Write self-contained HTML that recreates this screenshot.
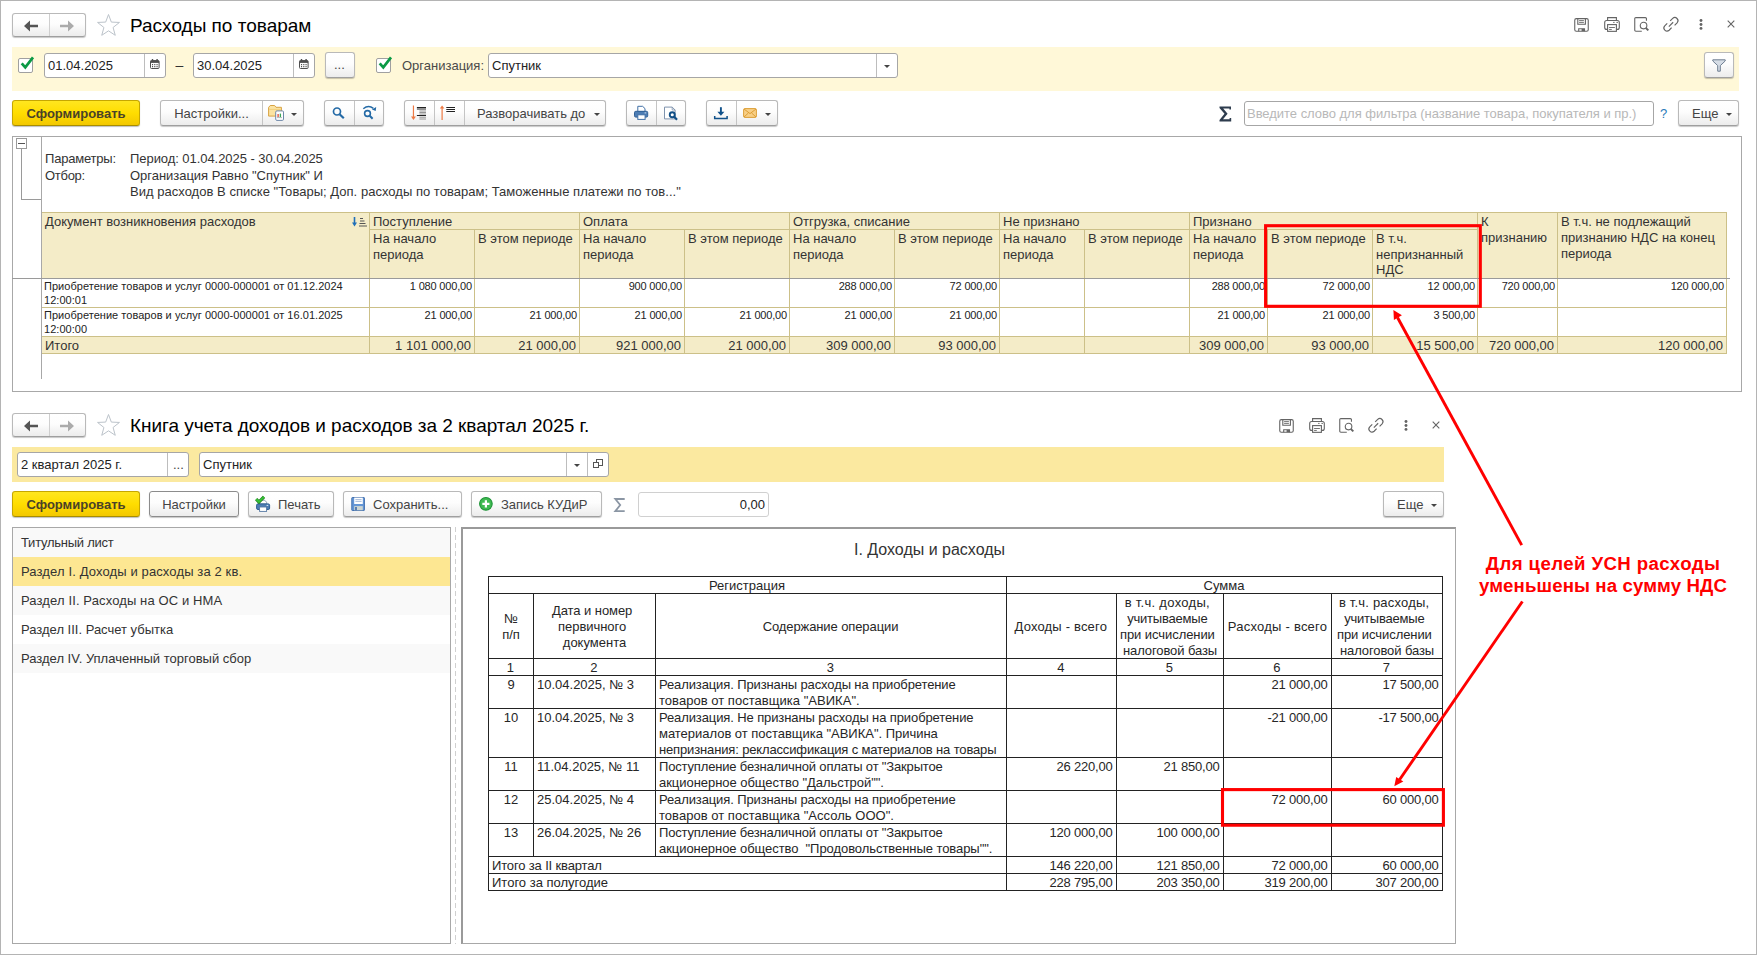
<!DOCTYPE html><html lang="ru"><head><meta charset="utf-8"><title>Расходы по товарам</title><style>
html,body{margin:0;padding:0;background:#fff;}
body{width:1759px;height:957px;position:relative;overflow:hidden;font-family:"Liberation Sans",Arial,sans-serif;font-size:13px;color:#333;}
div{position:absolute;box-sizing:border-box;}
svg{position:absolute;overflow:visible;}
.t{white-space:nowrap;line-height:16px;}
.l{}
.frame{border:1px solid #b4b4b4;}
.btn{border:1px solid #b9b9b9;border-bottom-color:#9f9f9f;border-radius:3px;background:linear-gradient(#ffffff 0%,#fdfdfd 45%,#ececec 100%);box-shadow:0 1px 1px rgba(0,0,0,.22);}
.btny{border:1px solid #c6a700;border-bottom-color:#a88d00;border-radius:3px;background:linear-gradient(#ffe620 0%,#ffdd00 50%,#f3c800 100%);box-shadow:0 1px 1px rgba(0,0,0,.25);}
.inp{border:1px solid #a6a6a6;border-radius:3px;background:#fff;}
.bt{color:#444;}
.title{font-size:19px;line-height:24px;color:#000;}
.small{font-size:11px;line-height:13px;color:#222;letter-spacing:0.035px;}
.rep{color:#333;}
.bk{color:#262626;line-height:15px;}
.red{color:#f00;font-weight:bold;font-size:19px;line-height:24px;}
</style></head><body>
<div class="frame" style="left:0px;top:0px;width:1757px;height:955px;"></div>
<div class="btn" style="left:12px;top:13px;width:74px;height:24px;"></div>
<div class="l" style="left:49px;top:14px;width:1px;height:22px;background:#cfcfcf"></div>
<svg style="left:23px;top:19.5px" width="16" height="12" viewBox="0 0 16 12"><path d="M1 6 L7 0.5 L7 4.7 L15 4.7 L15 7.3 L7 7.3 L7 11.5 Z" fill="#555"/></svg>
<svg style="left:59px;top:19.5px" width="16" height="12" viewBox="0 0 16 12"><path d="M15 6 L9 0.5 L9 4.7 L1 4.7 L1 7.3 L9 7.3 L9 11.5 Z" fill="#ababab"/></svg>
<svg style="left:0;top:0" width="1759" height="957"><polygon points="108.50,14.50 111.34,22.09 119.44,22.45 113.09,27.49 115.26,35.30 108.50,30.83 101.74,35.30 103.91,27.49 97.56,22.45 105.66,22.09" fill="#fff" stroke="#bcc3ca" stroke-width="1"/></svg>
<div class="t title" style="left:130px;top:14px;">Расходы по товарам</div>
<svg style="left:1574px;top:17px" width="16" height="16" viewBox="0 0 16 16" fill="none" stroke="#646464" stroke-width="1.1"><rect x="0.75" y="1.65" width="13.5" height="12.6" rx="1.6"/><path d="M3.8 1.7V7.3H11.4V1.7"/><path d="M5.1 3.6h4.8M5.1 5.4h4.8" stroke-width="0.9"/><path d="M4.7 14.2V11.7H10.5V14.2"/><rect x="7.6" y="11.9" width="2.7" height="2.2" fill="#646464" stroke="none"/></svg>
<svg style="left:1604px;top:17px" width="16" height="16" viewBox="0 0 16 16" fill="none" stroke="#646464" stroke-width="1.1"><path d="M3.6 3.4V0.6h8.8v2.8"/><rect x="0.7" y="3.5" width="14.6" height="8.9" rx="2"/><rect x="3.6" y="7.6" width="8.8" height="6.75" fill="#fff"/><path d="M5.1 10.5h5.8M5.1 12.45h2.7" stroke-width="0.9"/><path d="M9.1 5.4h1.5M12.4 5.4h1.6" stroke-width="0.9"/></svg>
<svg style="left:1634px;top:17px" width="16" height="16" viewBox="0 0 16 16" fill="none" stroke="#646464" stroke-width="1.1"><path d="M12.45 3.75V1.7a1.1 1.1 0 0 0-1.1-1.1H1.85a1.1 1.1 0 0 0-1.1 1.1v11.4a1.1 1.1 0 0 0 1.1 1.1H7.8"/><circle cx="9.55" cy="8.6" r="3.3"/><path d="M12.0 11.1l2.3 2.3" stroke-width="2"/></svg>
<svg style="left:1663.0px;top:17px" width="16" height="16" viewBox="0 0 16 16" fill="none" stroke="#646464" stroke-width="1.15" stroke-linecap="butt"><path d="M7.2 3.9L9.71 1.41A3.1 3.1 0 0 1 14.09 5.79L11.6 8.3"/><path d="M8.6 10.7L6.13 13.22A3.1 3.1 0 0 1 1.75 8.84L4.25 6.35"/><path d="M5.83 9.6L10.15 5.28"/></svg>
<svg style="left:1698.05px;top:17px" width="6" height="16" viewBox="0 0 6 16"><circle cx="3" cy="3.5" r="1.45" fill="#646464"/><circle cx="3" cy="7.5" r="1.45" fill="#646464"/><circle cx="3" cy="11.4" r="1.45" fill="#646464"/></svg>
<svg style="left:1727.0px;top:20.4px" width="8" height="8" viewBox="0 0 8 8"><path d="M0.7 0.7L7.3 7.3M7.3 0.7L0.7 7.3" stroke="#646464" stroke-width="1.1"/></svg>
<div class="" style="left:12px;top:47px;width:1727px;height:44px;background:#fff8d8;"></div>
<div class="" style="left:18px;top:58px;width:15px;height:15px;border:1px solid #a0a0a0;border-radius:2px;background:#fff;"></div>
<svg style="left:18px;top:56px" width="17" height="16" viewBox="0 0 17 16"><path d="M3.7 7.3 L7.3 11.4 L15.0 1.4" fill="none" stroke="#0b9a45" stroke-width="2.7"/></svg>
<div class="inp" style="left:44px;top:53px;width:122px;height:25px;"></div>
<div class="l" style="left:144px;top:54px;width:1px;height:23px;background:#bdbdbd"></div>
<div class="t " style="left:48px;top:58px;color:#222">01.04.2025</div>
<svg style="left:150px;top:59px" width="10" height="10" viewBox="0 0 10 10"><rect x="0.5" y="1.6" width="8.6" height="7.9" rx="1" fill="#fff" stroke="#4f4f4f"/><rect x="0.5" y="1.6" width="8.6" height="2.3" fill="#4f4f4f"/><rect x="1.8" y="0" width="1.4" height="2.6" fill="#4f4f4f"/><rect x="6.4" y="0" width="1.4" height="2.6" fill="#4f4f4f"/><path d="M2 5.6h1.1M4.25 5.6h1.1M6.5 5.6h1.1M2 7.6h1.1M4.25 7.6h1.1M6.5 7.6h1.1" stroke="#4f4f4f" stroke-width="1.1"/></svg>
<div class="t " style="left:175.5px;top:56.5px;color:#333;font-size:14px">–</div>
<div class="inp" style="left:193px;top:53px;width:122px;height:25px;"></div>
<div class="l" style="left:293px;top:54px;width:1px;height:23px;background:#bdbdbd"></div>
<div class="t " style="left:197px;top:58px;color:#222">30.04.2025</div>
<svg style="left:299px;top:59px" width="10" height="10" viewBox="0 0 10 10"><rect x="0.5" y="1.6" width="8.6" height="7.9" rx="1" fill="#fff" stroke="#4f4f4f"/><rect x="0.5" y="1.6" width="8.6" height="2.3" fill="#4f4f4f"/><rect x="1.8" y="0" width="1.4" height="2.6" fill="#4f4f4f"/><rect x="6.4" y="0" width="1.4" height="2.6" fill="#4f4f4f"/><path d="M2 5.6h1.1M4.25 5.6h1.1M6.5 5.6h1.1M2 7.6h1.1M4.25 7.6h1.1M6.5 7.6h1.1" stroke="#4f4f4f" stroke-width="1.1"/></svg>
<div class="btn" style="left:325px;top:52px;width:30px;height:26px;"></div>
<div class="t bt" style="left:334px;top:57px;">...</div>
<div class="" style="left:376px;top:58px;width:15px;height:15px;border:1px solid #a0a0a0;border-radius:2px;background:#fff;"></div>
<svg style="left:376px;top:56px" width="17" height="16" viewBox="0 0 17 16"><path d="M3.7 7.3 L7.3 11.4 L15.0 1.4" fill="none" stroke="#0b9a45" stroke-width="2.7"/></svg>
<div class="t " style="left:402px;top:58px;color:#4a4a4a">Организация:</div>
<div class="inp" style="left:488px;top:53px;width:410px;height:25px;"></div>
<div class="l" style="left:876px;top:54px;width:1px;height:23px;background:#bdbdbd"></div>
<div class="t " style="left:492px;top:58px;color:#222">Спутник</div>
<svg style="left:883.5px;top:65px" width="6" height="3" viewBox="0 0 6 3"><path d="M0 0h6L3 3z" fill="#444"/></svg>
<div class="btn" style="left:1704px;top:52px;width:30px;height:26px;"></div>
<svg style="left:1712px;top:59px" width="14" height="13" viewBox="0 0 14 13"><path d="M0.8 0.8h12.4v1.2L8.3 6.6v5.6H5.7V6.6L0.8 2z" fill="#d6dde6" stroke="#6f7f92" stroke-width="1"/></svg>
<div class="btny" style="left:12px;top:100px;width:128px;height:26px;"></div>
<div class="t " style="left:12.0px;width:128px;text-align:center;top:105.5px;font-weight:bold;color:#4a4228;">Сформировать</div>
<div class="btn" style="left:160px;top:100px;width:144px;height:26px;"></div>
<div class="l" style="left:262px;top:101px;width:1px;height:24px;background:#c4c4c4"></div>
<div class="t bt" style="left:160.5px;width:102px;text-align:center;top:105.5px;">Настройки...</div>
<svg style="left:266px;top:104px" width="20" height="18" viewBox="0 0 20 18"><path d="M2.6 12.1V3.4L4.2 1.5H8.6L10 3.3H15.4V12.1Z" fill="#fbe3a2" stroke="#d8a343" stroke-width="1"/><path d="M3.1 5.4H14.9" stroke="#f2cf7c" stroke-width="1"/><rect x="9.7" y="6.9" width="7.8" height="9.5" rx="1.2" fill="#fff" stroke="#6d87a8"/><path d="M12.1 13V10" stroke="#e04a3a" stroke-width="1.3"/><path d="M14.4 13V9.6" stroke="#3aa655" stroke-width="1.3"/><path d="M11 13.6h5" stroke="#9aa" stroke-width="0.8"/></svg>
<svg style="left:291.0px;top:113px" width="6" height="3" viewBox="0 0 6 3"><path d="M0 0h6L3 3z" fill="#444"/></svg>
<div class="btn" style="left:324px;top:100px;width:60px;height:26px;"></div>
<div class="l" style="left:354px;top:101px;width:1px;height:24px;background:#c4c4c4"></div>
<svg style="left:332px;top:105px" width="16" height="16" viewBox="0 0 16 16"><circle cx="5" cy="6.5" r="3.5" fill="none" stroke="#246aa6" stroke-width="1.7"/><path d="M7.6 9.2L11.8 13.3" stroke="#246aa6" stroke-width="2.2"/></svg>
<svg style="left:361px;top:104px" width="18" height="17" viewBox="0 0 18 17"><circle cx="6.5" cy="9.5" r="2.9" fill="none" stroke="#246aa6" stroke-width="1.6"/><path d="M8.7 11.7L11.6 14.7" stroke="#246aa6" stroke-width="2"/><path d="M2.3 4.8Q7.3 0.6 12.4 4.3" fill="none" stroke="#246aa6" stroke-width="1.5"/><path d="M15.2 3.0L14.7 7.1 10.9 5.6Z" fill="#246aa6"/></svg>
<div class="btn" style="left:404px;top:100px;width:202px;height:26px;"></div>
<div class="l" style="left:434px;top:101px;width:1px;height:24px;background:#c4c4c4"></div>
<div class="l" style="left:464px;top:101px;width:1px;height:24px;background:#c4c4c4"></div>
<svg style="left:410px;top:105px" width="20" height="17" viewBox="0 0 20 17"><path d="M3.45 0.5v13" stroke="#ee7a45" stroke-width="1.2"/><path d="M1 11.6h4.9L3.45 15z" fill="#ee7a45"/><path d="M6.9 2.5h9.1M6.9 4h9.1M6.9 10.5h9.1" stroke="#222" stroke-width="1"/><path d="M9.4 6h6.6M9.4 7.5h6.6M9.4 9h6.6M9.4 12.2h6.6M9.4 14h6.6" stroke="#8a8a8a" stroke-width="0.9"/></svg>
<svg style="left:440px;top:105px" width="20" height="17" viewBox="0 0 20 17"><path d="M2.1 2.5v12.5" stroke="#ee7a45" stroke-width="1.2"/><path d="M-0.2 3.6h4.6L2.1 0.6z" fill="#ee7a45"/><path d="M6.3 2.5h8.7M6.3 4.5h8.7M6.3 6.5h8.7" stroke="#222" stroke-width="1"/></svg>
<div class="t bt" style="left:477px;top:105.5px;">Разворачивать до</div>
<svg style="left:593.5px;top:113px" width="6" height="3" viewBox="0 0 6 3"><path d="M0 0h6L3 3z" fill="#444"/></svg>
<div class="btn" style="left:626px;top:100px;width:60px;height:26px;"></div>
<div class="l" style="left:656px;top:101px;width:1px;height:24px;background:#c4c4c4"></div>
<svg style="left:633px;top:105px" width="17" height="16" viewBox="0 0 17 16"><path d="M4.8 6.5V1.3H9.6L12 3.6V6.5Z" fill="#fff" stroke="#3f6fa6" stroke-width="1"/><rect x="1.5" y="6.3" width="13.2" height="5.8" rx="1.3" fill="#4d7db4" stroke="#2f5f95" stroke-width="1"/><path d="M11.6 7.9h1.6" stroke="#cfe0f2" stroke-width="1"/><rect x="4.8" y="9.8" width="7.3" height="4.6" fill="#fff" stroke="#3f6fa6" stroke-width="1"/></svg>
<svg style="left:663px;top:104px" width="17" height="18" viewBox="0 0 17 18"><path d="M1.5 3.1H9.2L12.1 6V14.9H1.5Z" fill="#fff" stroke="#7f93ad" stroke-width="1"/><path d="M9.2 3.1V6H12.1" fill="none" stroke="#7f93ad" stroke-width="0.8"/><circle cx="9.25" cy="10.75" r="2.5" fill="#fff" stroke="#114f86" stroke-width="1.9"/><path d="M11 12.6L14 15.7" stroke="#114f86" stroke-width="2.2"/></svg>
<div class="btn" style="left:706px;top:100px;width:72px;height:26px;"></div>
<div class="l" style="left:736px;top:101px;width:1px;height:24px;background:#c4c4c4"></div>
<svg style="left:713px;top:105px" width="16" height="16" viewBox="0 0 16 16"><path d="M7.9 2.2v6" stroke="#10518a" stroke-width="1.9"/><path d="M4.4 6.7h7L7.9 10.8z" fill="#10518a"/><path d="M1.7 11v2.6h12.4V11" fill="none" stroke="#10518a" stroke-width="1.5"/></svg>
<svg style="left:742px;top:107px" width="16" height="12" viewBox="0 0 16 12"><rect x="1.6" y="1.6" width="12.8" height="8.8" rx="1.2" fill="#f8cf86" stroke="#dc9f38"/><path d="M2 2l6 4.6L14 2M2 10l4.4-4M14 10l-4.4-4" fill="none" stroke="#d9982c" stroke-width="0.9"/></svg>
<svg style="left:764.5px;top:113px" width="6" height="3" viewBox="0 0 6 3"><path d="M0 0h6L3 3z" fill="#444"/></svg>
<svg style="left:1219px;top:106px" width="13" height="16" viewBox="0 0 13 16"><path d="M0.5 0.5h11.5v3h-1.6v-1H4.2l4.4 5.2-4.6 5.6h6.6v-1.2h1.6v3.4H0.5v-1.6l5-6.2L0.5 2z" fill="#2e3c4e"/></svg>
<div class="inp" style="left:1244px;top:101px;width:410px;height:25px;"></div>
<div class="t " style="left:1247px;top:105.5px;color:#b8b8b8;letter-spacing:-0.03px">Введите слово для фильтра (название товара, покупателя и пр.)</div>
<div class="t " style="left:1660px;top:105.5px;color:#2a7ab8">?</div>
<div class="btn" style="left:1678px;top:100px;width:61px;height:26px;"></div>
<div class="t bt" style="left:1692px;top:105.5px;">Еще</div>
<svg style="left:1726.0px;top:113px" width="6" height="3" viewBox="0 0 6 3"><path d="M0 0h6L3 3z" fill="#444"/></svg>
<div class="" style="left:12px;top:136px;width:1730px;height:256px;border:1px solid #a8a8a8;background:#fff;"></div>
<div class="l" style="left:41px;top:137px;width:1px;height:242px;background:#a8a8a8"></div>
<div class="" style="left:16px;top:138px;width:11px;height:11px;border:1px solid #9a9a9a;background:#fff;"></div>
<div class="l" style="left:18px;top:143px;width:7px;height:1px;background:#555"></div>
<div class="l" style="left:21px;top:149px;width:1px;height:51px;background:#9a9a9a"></div>
<div class="l" style="left:21px;top:199px;width:20px;height:1px;background:#9a9a9a"></div>
<div class="t rep" style="left:45px;top:151px;letter-spacing:-0.2px">Параметры:</div>
<div class="t rep" style="left:130px;top:151px;letter-spacing:-0.056px">Период: 01.04.2025 - 30.04.2025</div>
<div class="t rep" style="left:45px;top:168px;letter-spacing:-0.29px">Отбор:</div>
<div class="t rep" style="left:130px;top:168px;letter-spacing:-0.026px">Организация Равно "Спутник" И</div>
<div class="t rep" style="left:130px;top:184px;letter-spacing:0.025px">Вид расходов В списке "Товары; Доп. расходы по товарам; Таможенные платежи по тов..."</div>
<div class="" style="left:42px;top:212px;width:1685px;height:66px;background:#f4ecc8;"></div>
<div class="" style="left:42px;top:336px;width:1685px;height:18px;background:#f4ecc8;"></div>
<div class="l" style="left:42px;top:212px;width:1685px;height:1px;background:#ccc088"></div>
<div class="l" style="left:369px;top:229px;width:1108px;height:1px;background:#ccc088"></div>
<div class="l" style="left:369px;top:212px;width:1px;height:142px;background:#ccc088"></div>
<div class="l" style="left:579px;top:212px;width:1px;height:142px;background:#ccc088"></div>
<div class="l" style="left:789px;top:212px;width:1px;height:142px;background:#ccc088"></div>
<div class="l" style="left:999px;top:212px;width:1px;height:142px;background:#ccc088"></div>
<div class="l" style="left:1189px;top:212px;width:1px;height:142px;background:#ccc088"></div>
<div class="l" style="left:1477px;top:212px;width:1px;height:142px;background:#ccc088"></div>
<div class="l" style="left:1557px;top:212px;width:1px;height:142px;background:#ccc088"></div>
<div class="l" style="left:1726px;top:212px;width:1px;height:142px;background:#ccc088"></div>
<div class="l" style="left:474px;top:229px;width:1px;height:125px;background:#ccc088"></div>
<div class="l" style="left:684px;top:229px;width:1px;height:125px;background:#ccc088"></div>
<div class="l" style="left:894px;top:229px;width:1px;height:125px;background:#ccc088"></div>
<div class="l" style="left:1084px;top:229px;width:1px;height:125px;background:#ccc088"></div>
<div class="l" style="left:1267px;top:229px;width:1px;height:125px;background:#ccc088"></div>
<div class="l" style="left:1372px;top:229px;width:1px;height:125px;background:#ccc088"></div>
<div class="l" style="left:12px;top:278px;width:1718px;height:1px;background:#9a9a9a"></div>
<div class="l" style="left:42px;top:307px;width:1685px;height:1px;background:#ccc088"></div>
<div class="l" style="left:42px;top:336px;width:1685px;height:1px;background:#ccc088"></div>
<div class="l" style="left:42px;top:353px;width:1685px;height:1px;background:#ccc088"></div>
<div class="t rep" style="left:45px;top:214px;">Документ возникновения расходов</div>
<svg style="left:352px;top:217px" width="16" height="11" viewBox="0 0 16 11"><path d="M2.5 0v7" stroke="#1f6fb8" stroke-width="1.6"/><path d="M0 5.5h5L2.5 9.5z" fill="#1f6fb8"/><path d="M8 1.5h3M8 4h4.5M7.5 6.5h6M7 9h8" stroke="#555" stroke-width="1"/></svg>
<div class="t rep" style="left:373px;top:214px;">Поступление</div>
<div class="t rep" style="left:583px;top:214px;">Оплата</div>
<div class="t rep" style="left:793px;top:214px;">Отгрузка, списание</div>
<div class="t rep" style="left:1003px;top:214px;">Не признано</div>
<div class="t rep" style="left:1193px;top:214px;">Признано</div>
<div class="t rep" style="left:373px;top:231px;">На начало<br>периода</div>
<div class="t rep" style="left:583px;top:231px;">На начало<br>периода</div>
<div class="t rep" style="left:793px;top:231px;">На начало<br>периода</div>
<div class="t rep" style="left:1003px;top:231px;">На начало<br>периода</div>
<div class="t rep" style="left:1193px;top:231px;">На начало<br>периода</div>
<div class="t rep" style="left:478px;top:231px;">В этом периоде</div>
<div class="t rep" style="left:688px;top:231px;">В этом периоде</div>
<div class="t rep" style="left:898px;top:231px;">В этом периоде</div>
<div class="t rep" style="left:1088px;top:231px;">В этом периоде</div>
<div class="t rep" style="left:1271px;top:231px;">В этом периоде</div>
<div class="t rep" style="left:1376px;top:231px;line-height:15.5px">В т.ч.<br>непризнанный<br>НДС</div>
<div class="t rep" style="left:1481px;top:214px;">К<br>признанию</div>
<div class="t rep" style="left:1561px;top:214px;">В т.ч. не подлежащий<br>признанию НДС на конец<br>периода</div>
<div class="t small" style="left:44px;top:279px;line-height:14px">Приобретение товаров и услуг 0000-000001 от 01.12.2024<br>12:00:01</div>
<div class="t small" style="right:1287px;top:279px;line-height:14px;letter-spacing:-0.17px">1 080 000,00</div>
<div class="t small" style="right:1077px;top:279px;line-height:14px;letter-spacing:-0.17px">900 000,00</div>
<div class="t small" style="right:867px;top:279px;line-height:14px;letter-spacing:-0.17px">288 000,00</div>
<div class="t small" style="right:762px;top:279px;line-height:14px;letter-spacing:-0.17px">72 000,00</div>
<div class="t small" style="right:494px;top:279px;line-height:14px;letter-spacing:-0.17px">288 000,00</div>
<div class="t small" style="right:389px;top:279px;line-height:14px;letter-spacing:-0.17px">72 000,00</div>
<div class="t small" style="right:284px;top:279px;line-height:14px;letter-spacing:-0.17px">12 000,00</div>
<div class="t small" style="right:204px;top:279px;line-height:14px;letter-spacing:-0.17px">720 000,00</div>
<div class="t small" style="right:35px;top:279px;line-height:14px;letter-spacing:-0.17px">120 000,00</div>
<div class="t small" style="left:44px;top:308px;line-height:14px">Приобретение товаров и услуг 0000-000001 от 16.01.2025<br>12:00:00</div>
<div class="t small" style="right:1287px;top:308px;line-height:14px;letter-spacing:-0.17px">21 000,00</div>
<div class="t small" style="right:1182px;top:308px;line-height:14px;letter-spacing:-0.17px">21 000,00</div>
<div class="t small" style="right:1077px;top:308px;line-height:14px;letter-spacing:-0.17px">21 000,00</div>
<div class="t small" style="right:972px;top:308px;line-height:14px;letter-spacing:-0.17px">21 000,00</div>
<div class="t small" style="right:867px;top:308px;line-height:14px;letter-spacing:-0.17px">21 000,00</div>
<div class="t small" style="right:762px;top:308px;line-height:14px;letter-spacing:-0.17px">21 000,00</div>
<div class="t small" style="right:494px;top:308px;line-height:14px;letter-spacing:-0.17px">21 000,00</div>
<div class="t small" style="right:389px;top:308px;line-height:14px;letter-spacing:-0.17px">21 000,00</div>
<div class="t small" style="right:284px;top:308px;line-height:14px;letter-spacing:-0.17px">3 500,00</div>
<div class="t rep" style="left:45px;top:338px;">Итого</div>
<div class="t rep" style="right:1288px;top:338px;">1 101 000,00</div>
<div class="t rep" style="right:1183px;top:338px;">21 000,00</div>
<div class="t rep" style="right:1078px;top:338px;">921 000,00</div>
<div class="t rep" style="right:973px;top:338px;">21 000,00</div>
<div class="t rep" style="right:868px;top:338px;">309 000,00</div>
<div class="t rep" style="right:763px;top:338px;">93 000,00</div>
<div class="t rep" style="right:495px;top:338px;">309 000,00</div>
<div class="t rep" style="right:390px;top:338px;">93 000,00</div>
<div class="t rep" style="right:285px;top:338px;">15 500,00</div>
<div class="t rep" style="right:205px;top:338px;">720 000,00</div>
<div class="t rep" style="right:36px;top:338px;">120 000,00</div>
<div class="btn" style="left:12px;top:413px;width:74px;height:24px;"></div>
<div class="l" style="left:49px;top:414px;width:1px;height:22px;background:#cfcfcf"></div>
<svg style="left:23px;top:419.5px" width="16" height="12" viewBox="0 0 16 12"><path d="M1 6 L7 0.5 L7 4.7 L15 4.7 L15 7.3 L7 7.3 L7 11.5 Z" fill="#555"/></svg>
<svg style="left:59px;top:419.5px" width="16" height="12" viewBox="0 0 16 12"><path d="M15 6 L9 0.5 L9 4.7 L1 4.7 L1 7.3 L9 7.3 L9 11.5 Z" fill="#ababab"/></svg>
<svg style="left:0;top:0" width="1759" height="957"><polygon points="108.50,414.50 111.34,422.09 119.44,422.45 113.09,427.49 115.26,435.30 108.50,430.83 101.74,435.30 103.91,427.49 97.56,422.45 105.66,422.09" fill="#fff" stroke="#bcc3ca" stroke-width="1"/></svg>
<div class="t title" style="left:130px;top:414px;letter-spacing:-0.04px">Книга учета доходов и расходов за 2 квартал 2025 г.</div>
<svg style="left:1279.4px;top:417.5px" width="16" height="16" viewBox="0 0 16 16" fill="none" stroke="#646464" stroke-width="1.1"><rect x="0.75" y="1.65" width="13.5" height="12.6" rx="1.6"/><path d="M3.8 1.7V7.3H11.4V1.7"/><path d="M5.1 3.6h4.8M5.1 5.4h4.8" stroke-width="0.9"/><path d="M4.7 14.2V11.7H10.5V14.2"/><rect x="7.6" y="11.9" width="2.7" height="2.2" fill="#646464" stroke="none"/></svg>
<svg style="left:1309.4px;top:417.5px" width="16" height="16" viewBox="0 0 16 16" fill="none" stroke="#646464" stroke-width="1.1"><path d="M3.6 3.4V0.6h8.8v2.8"/><rect x="0.7" y="3.5" width="14.6" height="8.9" rx="2"/><rect x="3.6" y="7.6" width="8.8" height="6.75" fill="#fff"/><path d="M5.1 10.5h5.8M5.1 12.45h2.7" stroke-width="0.9"/><path d="M9.1 5.4h1.5M12.4 5.4h1.6" stroke-width="0.9"/></svg>
<svg style="left:1339.4px;top:417.5px" width="16" height="16" viewBox="0 0 16 16" fill="none" stroke="#646464" stroke-width="1.1"><path d="M12.45 3.75V1.7a1.1 1.1 0 0 0-1.1-1.1H1.85a1.1 1.1 0 0 0-1.1 1.1v11.4a1.1 1.1 0 0 0 1.1 1.1H7.8"/><circle cx="9.55" cy="8.6" r="3.3"/><path d="M12.0 11.1l2.3 2.3" stroke-width="2"/></svg>
<svg style="left:1368.4px;top:417.5px" width="16" height="16" viewBox="0 0 16 16" fill="none" stroke="#646464" stroke-width="1.15" stroke-linecap="butt"><path d="M7.2 3.9L9.71 1.41A3.1 3.1 0 0 1 14.09 5.79L11.6 8.3"/><path d="M8.6 10.7L6.13 13.22A3.1 3.1 0 0 1 1.75 8.84L4.25 6.35"/><path d="M5.83 9.6L10.15 5.28"/></svg>
<svg style="left:1403.45px;top:417.5px" width="6" height="16" viewBox="0 0 6 16"><circle cx="3" cy="3.5" r="1.45" fill="#646464"/><circle cx="3" cy="7.5" r="1.45" fill="#646464"/><circle cx="3" cy="11.4" r="1.45" fill="#646464"/></svg>
<svg style="left:1432.4px;top:420.9px" width="8" height="8" viewBox="0 0 8 8"><path d="M0.7 0.7L7.3 7.3M7.3 0.7L0.7 7.3" stroke="#646464" stroke-width="1.1"/></svg>
<div class="" style="left:12px;top:447px;width:1432px;height:35px;background:#fbe9a0;"></div>
<div class="inp" style="left:17px;top:452px;width:172px;height:25px;"></div>
<div class="l" style="left:167px;top:453px;width:1px;height:23px;background:#bdbdbd"></div>
<div class="t " style="left:21px;top:457px;color:#222">2 квартал 2025 г.</div>
<div class="t bt" style="left:173px;top:457px;">...</div>
<div class="inp" style="left:199px;top:452px;width:410px;height:25px;"></div>
<div class="l" style="left:566px;top:453px;width:1px;height:23px;background:#bdbdbd"></div>
<div class="l" style="left:587px;top:453px;width:1px;height:23px;background:#bdbdbd"></div>
<div class="t " style="left:203px;top:457px;color:#222">Спутник</div>
<svg style="left:573.5px;top:464px" width="6" height="3" viewBox="0 0 6 3"><path d="M0 0h6L3 3z" fill="#444"/></svg>
<svg style="left:593px;top:459px" width="10" height="10" viewBox="0 0 10 10" fill="#fff" stroke="#555"><rect x="3.5" y="0.5" width="6" height="6"/><rect x="0.5" y="3.5" width="5" height="5"/></svg>
<div class="btny" style="left:12px;top:491px;width:128px;height:26px;"></div>
<div class="t " style="left:12.0px;width:128px;text-align:center;top:497px;font-weight:bold;color:#4a4228;">Сформировать</div>
<div class="btn" style="left:149px;top:491px;width:90px;height:26px;border-color:#8c8c8c;"></div>
<div class="t bt" style="left:149.0px;width:90px;text-align:center;top:497px;">Настройки</div>
<div class="btn" style="left:248px;top:491px;width:86px;height:26px;"></div>
<div class="t bt" style="left:278px;top:497px;">Печать</div>
<svg style="left:254px;top:495px" width="18" height="18" viewBox="0 0 18 18"><path d="M5.6 9V5.2H10.6L12.6 7.2V9Z" fill="#fff" stroke="#7f93ad" stroke-width="0.9"/><rect x="2.6" y="8.9" width="13" height="5.6" rx="1.3" fill="#4d7db4" stroke="#2f5f95" stroke-width="1"/><path d="M12.6 10.4h1.6" stroke="#dfeaf6" stroke-width="1"/><rect x="5.6" y="12" width="7" height="4.4" fill="#fff" stroke="#5578a3" stroke-width="0.9"/><path d="M2.2 4.2L4.9 7 10 1.8" fill="none" stroke="#1f7a1f" stroke-width="3.2" stroke-linejoin="miter"/><path d="M2.2 4.2L4.9 7 10 1.8" fill="none" stroke="#35c435" stroke-width="1.9"/></svg>
<div class="btn" style="left:343px;top:491px;width:119px;height:26px;"></div>
<div class="t bt" style="left:373px;top:497px;">Сохранить...</div>
<svg style="left:350px;top:497px" width="16" height="15" viewBox="0 0 16 15"><rect x="1.8" y="0.5" width="12.6" height="13" rx="0.6" fill="#6496d6" stroke="#416fae"/><rect x="4.2" y="0.6" width="8.6" height="6.4" fill="#fff"/><path d="M5.4 2.6h6.2M5.4 4.4h6.2" stroke="#9fb6d6" stroke-width="0.9"/><rect x="4.2" y="9.1" width="8.6" height="4.2" fill="#cdd5d2"/><rect x="5.2" y="10" width="1.6" height="3.3" fill="#3f6cab"/></svg>
<div class="btn" style="left:471px;top:491px;width:131px;height:26px;"></div>
<div class="t bt" style="left:501px;top:497px;">Запись КУДиР</div>
<svg style="left:478px;top:497px" width="15" height="15" viewBox="0 0 15 15"><circle cx="7.9" cy="6.85" r="6.3" fill="#3fba52" stroke="#1f9438" stroke-width="1.1"/><path d="M7.9 3.3v7.1M4.35 6.85h7.1" stroke="#fff" stroke-width="2.2"/></svg>
<svg style="left:614px;top:498px" width="12" height="15" viewBox="0 0 12 15"><path d="M10.7 1H1.3L6.2 7 1.3 13.2H10.7" fill="none" stroke="#8b96a4" stroke-width="1.8" stroke-linejoin="miter"/></svg>
<div class="inp" style="left:638px;top:492px;width:131px;height:25px;border-color:#d0d0d0;"></div>
<div class="t " style="right:994px;top:497px;color:#222">0,00</div>
<div class="btn" style="left:1383px;top:491px;width:61px;height:26px;"></div>
<div class="t bt" style="left:1397px;top:497px;">Еще</div>
<svg style="left:1431.0px;top:504px" width="6" height="3" viewBox="0 0 6 3"><path d="M0 0h6L3 3z" fill="#444"/></svg>
<div class="" style="left:12px;top:527px;width:439px;height:417px;border:1px solid #a8a8a8;background:#fff;"></div>
<div class="" style="left:13px;top:528px;width:437px;height:29px;background:#f9f9f9;"></div>
<div class="t " style="left:21px;top:535px;color:#333;letter-spacing:-0.25px">Титульный лист</div>
<div class="" style="left:13px;top:557px;width:437px;height:29px;background:#fde792;"></div>
<div class="t " style="left:21px;top:564px;color:#333;letter-spacing:0.125px">Раздел I. Доходы и расходы за 2 кв.</div>
<div class="" style="left:13px;top:586px;width:437px;height:29px;background:#f9f9f9;"></div>
<div class="t " style="left:21px;top:593px;color:#333;letter-spacing:0.12px">Раздел II. Расходы на ОС и НМА</div>
<div class="t " style="left:21px;top:622px;color:#333;letter-spacing:0px">Раздел III. Расчет убытка</div>
<div class="" style="left:13px;top:644px;width:437px;height:29px;background:#f9f9f9;"></div>
<div class="t " style="left:21px;top:651px;color:#333;letter-spacing:0px">Раздел IV. Уплаченный торговый сбор</div>
<div style="left:455px;top:527px;width:1px;height:417px;background:repeating-linear-gradient(#d0d0d0 0,#d0d0d0 5px,#fff 5px,#fff 8px)"></div>
<div class="" style="left:461px;top:527px;width:995px;height:417px;border:1px solid #a8a8a8;border-left:2px solid #9a9a9a;border-top:2px solid #9a9a9a;background:#fff;"></div>
<div class="t " style="left:779.5px;width:300px;text-align:center;top:540px;font-size:16px;line-height:20px;color:#333">I. Доходы и расходы</div>
<div class="l" style="left:488px;top:576px;width:955px;height:1px;background:#222"></div>
<div class="l" style="left:488px;top:593px;width:955px;height:1px;background:#222"></div>
<div class="l" style="left:488px;top:658px;width:955px;height:1px;background:#222"></div>
<div class="l" style="left:488px;top:675px;width:955px;height:1px;background:#222"></div>
<div class="l" style="left:488px;top:708px;width:955px;height:1px;background:#222"></div>
<div class="l" style="left:488px;top:757px;width:955px;height:1px;background:#222"></div>
<div class="l" style="left:488px;top:790px;width:955px;height:1px;background:#222"></div>
<div class="l" style="left:488px;top:823px;width:955px;height:1px;background:#222"></div>
<div class="l" style="left:488px;top:856px;width:955px;height:1px;background:#222"></div>
<div class="l" style="left:488px;top:873px;width:955px;height:1px;background:#222"></div>
<div class="l" style="left:488px;top:890px;width:955px;height:1px;background:#222"></div>
<div class="l" style="left:488px;top:576px;width:1px;height:315px;background:#222"></div>
<div class="l" style="left:1442px;top:576px;width:1px;height:315px;background:#222"></div>
<div class="l" style="left:1006px;top:576px;width:1px;height:315px;background:#222"></div>
<div class="l" style="left:533px;top:593px;width:1px;height:264px;background:#222"></div>
<div class="l" style="left:655px;top:593px;width:1px;height:264px;background:#222"></div>
<div class="l" style="left:1116px;top:593px;width:1px;height:298px;background:#222"></div>
<div class="l" style="left:1223px;top:593px;width:1px;height:298px;background:#222"></div>
<div class="l" style="left:1331px;top:593px;width:1px;height:298px;background:#222"></div>
<div class="t bk" style="left:547.0px;width:400px;text-align:center;top:578px;">Регистрация</div>
<div class="t bk" style="left:1024.0px;width:400px;text-align:center;top:578px;">Сумма</div>
<div class="t bk" style="left:311.0px;width:400px;text-align:center;top:611px;line-height:16px">№<br>п/п</div>
<div class="t bk" style="left:394.5px;width:400px;text-align:center;top:603px;line-height:16px"><span style="position:relative;left:-2.4px;letter-spacing:-0.06px">Дата и номер</span><br><span style="position:relative;left:-2.4px;letter-spacing:-0.05px">первичного</span><br><span style="position:relative;left:0px;letter-spacing:0px">документа</span></div>
<div class="t bk" style="left:631.0px;width:400px;text-align:center;top:619px;letter-spacing:-0.1px;margin-left:-0.5px">Содержание операции</div>
<div class="t bk" style="left:861.5px;width:400px;text-align:center;top:619px;letter-spacing:0.18px;margin-left:-0.7px">Доходы - всего</div>
<div class="t bk" style="left:970.0px;width:400px;text-align:center;top:595px;line-height:16px"><span style="position:relative;left:-2.7px;letter-spacing:0.3px">в т.ч. доходы,</span><br><span style="position:relative;left:-2.7px;letter-spacing:-0.2px">учитываемые</span><br><span style="position:relative;left:-2.6px;letter-spacing:-0.07px">при исчислении</span><br><span style="position:relative;left:0px;letter-spacing:-0.1px">налоговой базы</span></div>
<div class="t bk" style="left:1077.5px;width:400px;text-align:center;top:619px;letter-spacing:0.24px">Расходы - всего</div>
<div class="t bk" style="left:1187.0px;width:400px;text-align:center;top:595px;line-height:16px"><span style="position:relative;left:-2.9px;letter-spacing:0.19px">в т.ч. расходы,</span><br><span style="position:relative;left:-2.7px;letter-spacing:-0.2px">учитываемые</span><br><span style="position:relative;left:-2.6px;letter-spacing:-0.07px">при исчислении</span><br><span style="position:relative;left:0px;letter-spacing:-0.1px">налоговой базы</span></div>
<div class="t bk" style="left:310.3px;width:400px;text-align:center;top:660px;">1</div>
<div class="t bk" style="left:393.79999999999995px;width:400px;text-align:center;top:660px;">2</div>
<div class="t bk" style="left:630.3px;width:400px;text-align:center;top:660px;">3</div>
<div class="t bk" style="left:860.8px;width:400px;text-align:center;top:660px;">4</div>
<div class="t bk" style="left:969.3px;width:400px;text-align:center;top:660px;">5</div>
<div class="t bk" style="left:1076.8px;width:400px;text-align:center;top:660px;">6</div>
<div class="t bk" style="left:1186.3px;width:400px;text-align:center;top:660px;">7</div>
<div class="t bk" style="left:311.0px;width:400px;text-align:center;top:677px;">9</div>
<div class="t bk" style="left:537px;top:677px;">10.04.2025, № 3</div>
<div class="t bk" style="left:659px;top:677px;line-height:16px;white-space:pre"><span style="letter-spacing:-0.115px">Реализация. Признаны расходы на приобретение</span><br><span style="letter-spacing:0.03px">товаров от поставщика "АВИКА".</span></div>
<div class="t bk" style="right:431.4000000000001px;top:677px;letter-spacing:-0.2px">21 000,00</div>
<div class="t bk" style="right:320.4000000000001px;top:677px;letter-spacing:-0.2px">17 500,00</div>
<div class="t bk" style="left:311.0px;width:400px;text-align:center;top:710px;">10</div>
<div class="t bk" style="left:537px;top:710px;">10.04.2025, № 3</div>
<div class="t bk" style="left:659px;top:710px;line-height:16px;white-space:pre"><span style="letter-spacing:-0.11px">Реализация. Не признаны расходы на приобретение</span><br><span style="letter-spacing:-0.025px">материалов от поставщика "АВИКА". Причина</span><br><span style="letter-spacing:-0.145px">непризнания: реклассификация с материалов на товары</span></div>
<div class="t bk" style="right:431.4000000000001px;top:710px;letter-spacing:-0.2px">-21 000,00</div>
<div class="t bk" style="right:320.4000000000001px;top:710px;letter-spacing:-0.2px">-17 500,00</div>
<div class="t bk" style="left:311.0px;width:400px;text-align:center;top:759px;">11</div>
<div class="t bk" style="left:537px;top:759px;">11.04.2025, № 11</div>
<div class="t bk" style="left:659px;top:759px;line-height:16px;white-space:pre"><span style="letter-spacing:-0.167px">Поступление безналичной оплаты от "Закрытое</span><br><span style="letter-spacing:-0.04px">акционерное общество "Дальстрой"".</span></div>
<div class="t bk" style="right:646.4000000000001px;top:759px;letter-spacing:-0.2px">26 220,00</div>
<div class="t bk" style="right:539.4000000000001px;top:759px;letter-spacing:-0.2px">21 850,00</div>
<div class="t bk" style="left:311.0px;width:400px;text-align:center;top:792px;">12</div>
<div class="t bk" style="left:537px;top:792px;">25.04.2025, № 4</div>
<div class="t bk" style="left:659px;top:792px;line-height:16px;white-space:pre"><span style="letter-spacing:-0.115px">Реализация. Признаны расходы на приобретение</span><br><span style="letter-spacing:0.03px">товаров от поставщика "Ассоль ООО".</span></div>
<div class="t bk" style="right:431.4000000000001px;top:792px;letter-spacing:-0.2px">72 000,00</div>
<div class="t bk" style="right:320.4000000000001px;top:792px;letter-spacing:-0.2px">60 000,00</div>
<div class="t bk" style="left:311.0px;width:400px;text-align:center;top:825px;">13</div>
<div class="t bk" style="left:537px;top:825px;">26.04.2025, № 26</div>
<div class="t bk" style="left:659px;top:825px;line-height:16px;white-space:pre"><span style="letter-spacing:-0.167px">Поступление безналичной оплаты от "Закрытое</span><br><span style="letter-spacing:-0.06px">акционерное общество  "Продовольственные товары"".</span></div>
<div class="t bk" style="right:646.4000000000001px;top:825px;letter-spacing:-0.2px">120 000,00</div>
<div class="t bk" style="right:539.4000000000001px;top:825px;letter-spacing:-0.2px">100 000,00</div>
<div class="t bk" style="left:492px;top:858px;letter-spacing:-0.15px">Итого за II квартал</div>
<div class="t bk" style="left:492px;top:875px;">Итого за полугодие</div>
<div class="t bk" style="right:646.4000000000001px;top:858px;letter-spacing:-0.2px">146 220,00</div>
<div class="t bk" style="right:539.4000000000001px;top:858px;letter-spacing:-0.2px">121 850,00</div>
<div class="t bk" style="right:431.4000000000001px;top:858px;letter-spacing:-0.2px">72 000,00</div>
<div class="t bk" style="right:320.4000000000001px;top:858px;letter-spacing:-0.2px">60 000,00</div>
<div class="t bk" style="right:646.4000000000001px;top:875px;letter-spacing:-0.2px">228 795,00</div>
<div class="t bk" style="right:539.4000000000001px;top:875px;letter-spacing:-0.2px">203 350,00</div>
<div class="t bk" style="right:431.4000000000001px;top:875px;letter-spacing:-0.2px">319 200,00</div>
<div class="t bk" style="right:320.4000000000001px;top:875px;letter-spacing:-0.2px">307 200,00</div>
<svg style="left:0;top:0" width="1759" height="957" viewBox="0 0 1759 957"><g fill="none" stroke="#f00" stroke-width="3.1"><rect x="1265.6" y="225.7" width="214.7" height="80.6"/><rect x="1222.5" y="789.6" width="220.9" height="35.6"/></g><g stroke="#f00" stroke-width="2.9" fill="#f00"><path d="M1521.7 545.1L1397.5 317.5"/><path d="M1393.4 309.9L1393.9 319.9 1401.9 315.3Z" stroke="none"/><path d="M1522.4 601.5L1399.5 779.8"/><path d="M1394.3 786.3L1396.2 776.9 1403.3 781.6Z" stroke="none"/></g></svg>
<div class="t red" style="left:1453.0px;width:300px;text-align:center;top:553px;line-height:22px;font-size:18.67px"><span style="letter-spacing:0.4px">Для целей УСН расходы</span><br><span style="letter-spacing:0.1px">уменьшены на сумму НДС</span></div>
</body></html>
